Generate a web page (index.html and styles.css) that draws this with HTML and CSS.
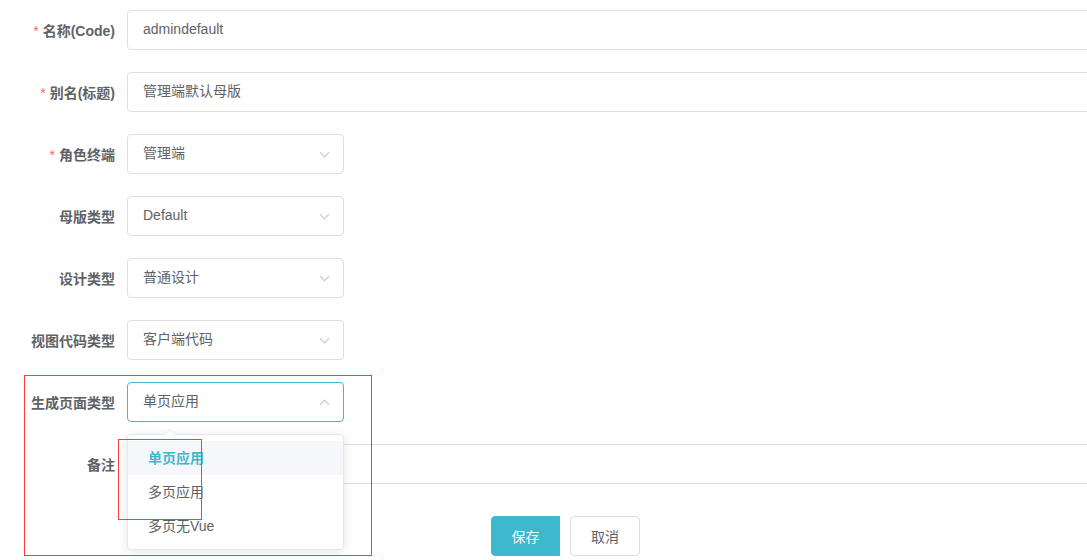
FILE: index.html
```html
<!DOCTYPE html>
<html>
<head>
  <meta charset="UTF-8">
  <title>母版编辑</title>
  <link rel="stylesheet" href="styles.css">
</head>
<body>
  <form class="form">
    <div class="form-item">
      <label class="form-label"><span class="req">*</span>名称(Code)</label>
      <div class="input wide">admindefault</div>
    </div>
    <div class="form-item">
      <label class="form-label"><span class="req">*</span>别名(标题)</label>
      <div class="input wide">管理端默认母版</div>
    </div>
    <div class="form-item">
      <label class="form-label"><span class="req">*</span>角色终端</label>
      <div class="input select">管理端<span class="arrow"></span></div>
    </div>
    <div class="form-item">
      <label class="form-label">母版类型</label>
      <div class="input select">Default<span class="arrow"></span></div>
    </div>
    <div class="form-item">
      <label class="form-label">设计类型</label>
      <div class="input select">普通设计<span class="arrow"></span></div>
    </div>
    <div class="form-item">
      <label class="form-label">视图代码类型</label>
      <div class="input select">客户端代码<span class="arrow"></span></div>
    </div>
    <div class="form-item">
      <label class="form-label">生成页面类型</label>
      <div class="input select focus">单页应用<span class="arrow up"></span></div>
    </div>
    <div class="form-item">
      <label class="form-label">备注</label>
      <div class="input wide"></div>
    </div>
    <div class="form-actions">
      <button type="button" class="btn primary">保存</button>
      <button type="button" class="btn">取消</button>
    </div>
  </form>

  <div class="dropdown">
    <span class="dropdown-arrow"></span>
    <ul>
      <li class="active">单页应用</li>
      <li>多页应用</li>
      <li>多页无Vue</li>
    </ul>
  </div>

  <div class="mark mark-big"></div>
  <div class="mark mark-small"></div>
</body>
</html>
```
FILE: styles.css
```css
body {
  margin: 0;
  background: #fff;
  font-family: "Liberation Sans", "Noto Sans CJK SC", sans-serif;
  font-size: 14px;
  color: #606266;
  overflow: hidden;
}

.form {
  padding-top: 10px;
}

.form-item {
  display: flex;
  align-items: center;
  height: 40px;
  margin-bottom: 22px;
}

.form-label {
  width: 115px;
  padding-right: 12px;
  text-align: right;
  font-weight: bold;
  color: #606266;
  flex-shrink: 0;
}

.req {
  color: #f56c6c;
  margin-right: 4px;
  font-weight: normal;
}

.input {
  box-sizing: border-box;
  height: 40px;
  line-height: 37px;
  border: 1px solid #dcdfe6;
  border-radius: 4px;
  padding: 0 15px;
  color: #606266;
  flex-shrink: 0;
  position: relative;
}

.wide {
  width: 980px;
}

.select {
  width: 217px;
}

.select.focus {
  border-color: #3db8cc;
}

.arrow {
  position: absolute;
  right: 15px;
  top: 14px;
  width: 6px;
  height: 6px;
  border-right: 1px solid #c0c4cc;
  border-bottom: 1px solid #c0c4cc;
  transform: rotate(45deg);
}

.arrow.up {
  top: 18px;
  transform: rotate(225deg);
}

.form-actions {
  display: flex;
  gap: 10px;
  padding-left: 491px;
  margin-top: 32px;
}

.btn {
  box-sizing: border-box;
  height: 40px;
  width: 70px;
  border: 1px solid #dcdfe6;
  border-radius: 4px;
  background: #fff;
  color: #606266;
  font-family: inherit;
  font-size: 14px;
}

.btn.primary {
  width: 69px;
  background: #3db8cc;
  border-color: #3db8cc;
  color: #fff;
  border-radius: 4px 0 0 4px;
}

.dropdown {
  position: absolute;
  left: 127px;
  top: 434px;
  width: 217px;
  box-sizing: border-box;
  background: #fff;
  border: 1px solid #e4e7ed;
  border-radius: 4px;
  box-shadow: 0 2px 12px rgba(0, 0, 0, 0.1);
  padding: 6px 0;
}

.dropdown ul {
  list-style: none;
  margin: 0;
  padding: 0;
}

.dropdown li {
  height: 34px;
  line-height: 34px;
  padding: 0 20px;
  color: #606266;
}

.dropdown li.active {
  background: #f5f7fa;
  color: #3db8cc;
  font-weight: bold;
}

.dropdown-arrow {
  position: absolute;
  left: 36px;
  top: -6px;
  width: 0;
  height: 0;
  border-left: 6px solid transparent;
  border-right: 6px solid transparent;
  border-bottom: 6px solid #e4e7ed;
}

.dropdown-arrow::after {
  content: "";
  position: absolute;
  left: -5px;
  top: 1px;
  border-left: 5px solid transparent;
  border-right: 5px solid transparent;
  border-bottom: 5px solid #fff;
}

.mark {
  position: absolute;
  border: 1px solid #ff3b3b;
  box-sizing: border-box;
}

.mark-big {
  left: 24px;
  top: 375px;
  width: 348px;
  height: 181px;
}

.mark-small {
  left: 118px;
  top: 439px;
  width: 84px;
  height: 81px;
}
```
